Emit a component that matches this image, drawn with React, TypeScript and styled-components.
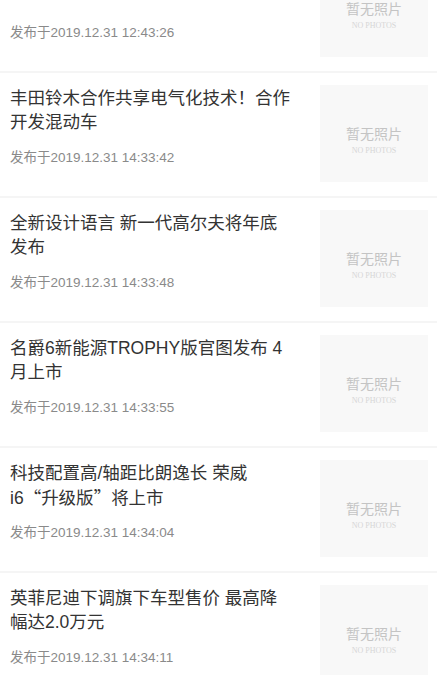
import styled, { createGlobalStyle } from "styled-components";

const GlobalStyle = createGlobalStyle`
  html, body {
    margin: 0;
    padding: 0;
    background: #fff;
    overflow: hidden;
  }
  body {
    font-family: "Liberation Sans", "Noto Sans CJK SC", sans-serif;
  }
`;

interface NewsItem {
  title: string;
  time: string;
}

const news: NewsItem[] = [
  { title: "广汽新能源全新车型年内发布", time: "2019.12.31 12:43:26" },
  { title: "丰田铃木合作共享电气化技术！合作开发混动车", time: "2019.12.31 14:33:42" },
  { title: "全新设计语言 新一代高尔夫将年底发布", time: "2019.12.31 14:33:48" },
  { title: "名爵6新能源TROPHY版官图发布 4月上市", time: "2019.12.31 14:33:55" },
  { title: "科技配置高/轴距比朗逸长 荣威i6“升级版”将上市", time: "2019.12.31 14:34:04" },
  { title: "英菲尼迪下调旗下车型售价 最高降幅达2.0万元", time: "2019.12.31 14:34:11" },
];

const List = styled.div`
  display: flex;
  flex-direction: column;
  margin-top: -52px;
`;

const Item = styled.div`
  display: flex;
  gap: 29px;
  padding: 12px 9px 14px 10px;
  border-bottom: 2px solid #f5f5f5;
`;

const Info = styled.div`
  width: 281px;
  display: flex;
  flex-direction: column;
  padding-top: 1px;
`;

const Title = styled.div`
  font-size: 17.5px;
  line-height: 24px;
  height: 48px;
  color: #333;
  overflow: hidden;
`;

/* curly quotes are full-width in the original CJK font */
const Quote = styled.span`
  font-family: "Noto Sans CJK SC", sans-serif;
`;

const Time = styled.div`
  margin-top: 14px;
  font-size: 13.5px;
  line-height: 20px;
  color: #8a8a8a;
`;

const Thumb = styled.div`
  width: 108px;
  height: 97px;
  background: #f8f8f8;
  display: flex;
  flex-direction: column;
  align-items: center;
  justify-content: center;
  gap: 5px;
  padding-top: 14px;
  box-sizing: border-box;
`;

const ThumbLabel = styled.div`
  font-family: "Noto Sans CJK SC", serif;
  font-size: 14px;
  line-height: 16px;
  color: #c4c4c4;
`;

const ThumbSub = styled.div`
  font-family: "Liberation Serif", serif;
  font-size: 8px;
  line-height: 10px;
  color: #d6d6d6;
`;

function renderTitle(title: string) {
  return title.split(/([“”])/).map((part, i) =>
    part === "“" || part === "”" ? <Quote key={i}>{part}</Quote> : part
  );
}

export default function App() {
  return (
    <>
      <GlobalStyle />
      <List>
        {news.map((n) => (
          <Item key={n.time}>
            <Info>
              <Title>{renderTitle(n.title)}</Title>
              <Time>发布于{n.time}</Time>
            </Info>
            <Thumb>
              <ThumbLabel>暂无照片</ThumbLabel>
              <ThumbSub>NO PHOTOS</ThumbSub>
            </Thumb>
          </Item>
        ))}
      </List>
    </>
  );
}
